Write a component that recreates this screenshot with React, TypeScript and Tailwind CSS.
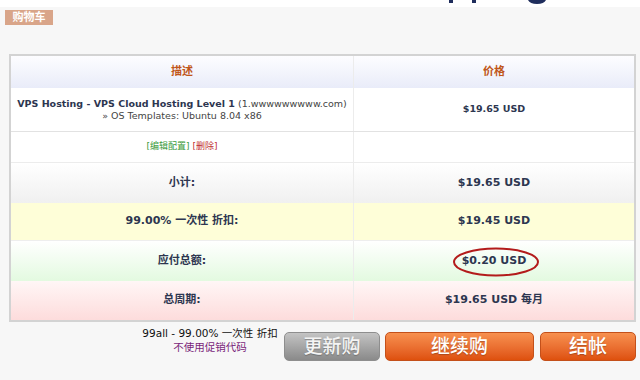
import React from "react";

const F = { fontFamily: '"DejaVu Sans", "Noto Sans CJK SC", sans-serif' };

function Row({
  bg,
  left,
  right,
  h,
  border,
  children,
}: {
  bg: string;
  left: React.ReactNode;
  right: React.ReactNode;
  h: string;
  border?: string;
  children?: React.ReactNode;
}) {
  return (
    <div className={`grid grid-cols-[342px_1fr] ${h} ${bg} ${border ?? ""}`}>
      <div className="flex items-center justify-center">{left}</div>
      <div className="relative flex items-center justify-center border-l border-[#ececec]">
        {right}
        {children}
      </div>
    </div>
  );
}

export default function App() {
  const sum = "text-[11px] font-bold text-[#2d3650]";
  return (
    <div className="w-[640px] h-[380px] overflow-hidden bg-[#f7f7f7]" style={F}>
      <div className="h-[7px] bg-white">
        <svg width="640" height="7" className="block">
          <rect x="449" y="0" width="4" height="3" fill="#1f2d5c" />
          <rect x="472" y="0" width="4" height="3" fill="#1f2d5c" />
          <path d="M528 0 Q530 4 537 4 Q544 4 546 0 Z" fill="#1f2d5c" />
        </svg>
      </div>
      <div className="ml-[5px] mt-[3px] w-[48px] h-[15px] bg-[#d9a589] flex items-center justify-center text-[11px] font-bold text-white leading-none">
        购物车
      </div>
      <div className="ml-[9px] mt-[29px] w-[627px] border-2 border-[#d3d3d3]">
        <Row
          h="h-[32px]"
          bg="bg-gradient-to-b from-[#fdfdff] to-[#e9ecf9]"
          left={<span className="text-[11px] font-bold text-[#c0561a]">描述</span>}
          right={<span className="text-[11px] font-bold text-[#c0561a]">价格</span>}
        />
        <Row
          h="h-[44px]"
          bg="bg-white"
          border="border-b border-[#e2e2e2]"
          left={
            <div className="text-center leading-[12px]">
              <div className="whitespace-nowrap text-[9.5px] text-[#2d3650]">
                <span className="font-bold">VPS Hosting - VPS Cloud Hosting Level 1</span>{" "}
                <span className="text-[#444]">(1.wwwwwwwww.com)</span>
              </div>
              <div className="whitespace-nowrap text-[9.5px] text-[#444]">» OS Templates: Ubuntu 8.04 x86</div>
            </div>
          }
          right={<span className="text-[9.5px] font-bold text-[#2d3650]">$19.65 USD</span>}
        />
        <Row
          h="h-[31px]"
          bg="bg-white"
          border="border-b border-[#ececec]"
          left={
            <span className="text-[9px] whitespace-nowrap">
              <span className="text-[#3a9a3a]">[编辑配置]</span>{" "}
              <span className="text-[#c03030]">[删除]</span>
            </span>
          }
          right={null}
        />
        <Row
          h="h-[40px]"
          bg="bg-gradient-to-b from-white to-[#f0f0f0]"
          left={<span className={sum}>小计:</span>}
          right={<span className={sum}>$19.65 USD</span>}
        />
        <Row
          h="h-[38px]"
          bg="bg-[#fefed8]"
          border="border-b border-[#eeeeee]"
          left={<span className={sum}>99.00% 一次性 折扣:</span>}
          right={<span className={sum}>$19.45 USD</span>}
        />
        <Row
          h="h-[40px]"
          bg="bg-gradient-to-b from-white to-[#e3fae0]"
          left={<span className={sum}>应付总额:</span>}
          right={<span className={sum}>$0.20 USD</span>}
        >
          <svg width="90" height="32" className="absolute left-[97px] top-[5px]">
            <ellipse cx="45" cy="16" rx="42" ry="13.5" fill="none" stroke="#b31b1b" strokeWidth="2" />
          </svg>
        </Row>
        <Row
          h="h-[39px]"
          bg="bg-gradient-to-b from-[#fff6f6] to-[#fddcdc]"
          left={<span className={sum}>总周期:</span>}
          right={<span className={sum}>$19.65 USD 每月</span>}
        />
      </div>
      <div className="flex items-start mt-[4px]">
        <div className="ml-[140px] w-[140px] text-center text-[10.5px] leading-[14px] whitespace-nowrap">
          <div className="text-[#111]">99all - 99.00% 一次性 折扣</div>
          <div className="text-[#7a1f7a]">不使用促销代码</div>
        </div>
        <button className="ml-[4px] mt-[6px] w-[96px] h-[29px] rounded-[5px] border border-[#8e8e8e] bg-gradient-to-b from-[#c4c4c4] to-[#8a8a8a] text-[19px] font-medium text-[#f4f4f4] leading-none flex items-center justify-center [text-shadow:0_1px_1px_rgba(0,0,0,0.25)]">
          更新购
        </button>
        <button className="ml-[5px] mt-[6px] w-[149px] h-[29px] rounded-[5px] border border-[#c4501a] bg-gradient-to-b from-[#f7904e] to-[#de500c] text-[19px] font-medium text-white leading-none flex items-center justify-center [text-shadow:0_1px_1px_rgba(0,0,0,0.25)]">
          继续购
        </button>
        <button className="ml-[6px] mt-[6px] w-[96px] h-[29px] rounded-[5px] border border-[#c4501a] bg-gradient-to-b from-[#f7904e] to-[#de500c] text-[19px] font-medium text-white leading-none flex items-center justify-center [text-shadow:0_1px_1px_rgba(0,0,0,0.25)]">
          结帐
        </button>
      </div>
    </div>
  );
}
